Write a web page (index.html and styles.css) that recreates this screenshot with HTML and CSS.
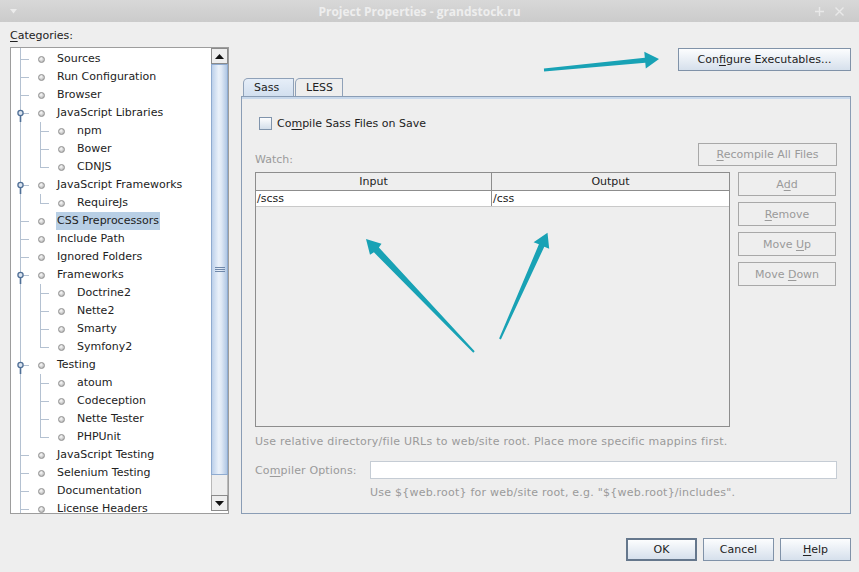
FILE: index.html
```html
<!DOCTYPE html>
<html>
<head>
<meta charset="utf-8">
<title>Project Properties - grandstock.ru</title>
<link rel="stylesheet" href="styles.css">
</head>
<body>
<div class="titlebar">
  <div class="tb-left"><svg width="7" height="5" viewBox="0 0 7 5"><path d="M0 0H7L3.5 4.5Z" fill="#ececec"/></svg></div>
  <div class="tb-title">Project Properties - grandstock.ru</div>
  <div class="tb-right">
    <svg width="9" height="9" viewBox="0 0 9 9"><path d="M4.5 0V9M0 4.5H9" stroke="#e9e9e9" stroke-width="1.4"/></svg>
    <svg width="9" height="9" viewBox="0 0 9 9"><path d="M0.5 0.5L8.5 8.5M8.5 0.5L0.5 8.5" stroke="#e9e9e9" stroke-width="1.4"/></svg>
  </div>
</div>

<div class="main">
  <div class="left">
    <div class="cat-label"><u>C</u>ategories:</div>
    <div class="treebox">
      <div class="tree">
        <div class="row"><i class="t0"></i><i class="bul"></i><span class="lbl">Sources</span></div>
        <div class="row"><i class="t0"></i><i class="bul"></i><span class="lbl">Run Configuration</span></div>
        <div class="row"><i class="t0"></i><i class="bul"></i><span class="lbl">Browser</span></div>
        <div class="row"><i class="t0 open"><svg width="18" height="18" viewBox="0 0 18 18"><path d="M9.5 11.5V18" stroke="#4f6f96" stroke-width="1.6"/><circle cx="9.5" cy="9" r="2.6" fill="#dbe4ef" stroke="#4f6f96" stroke-width="1.3"/></svg></i><i class="bul"></i><span class="lbl">JavaScript Libraries</span></div>
        <div class="row"><i class="sp1"></i><i class="t1"></i><i class="bul"></i><span class="lbl">npm</span></div>
        <div class="row"><i class="sp1"></i><i class="t1"></i><i class="bul"></i><span class="lbl">Bower</span></div>
        <div class="row last"><i class="sp1"></i><i class="t1"></i><i class="bul"></i><span class="lbl">CDNJS</span></div>
        <div class="row"><i class="t0 open"><svg width="18" height="18" viewBox="0 0 18 18"><path d="M9.5 11.5V18" stroke="#4f6f96" stroke-width="1.6"/><circle cx="9.5" cy="9" r="2.6" fill="#dbe4ef" stroke="#4f6f96" stroke-width="1.3"/></svg></i><i class="bul"></i><span class="lbl">JavaScript Frameworks</span></div>
        <div class="row last"><i class="sp1"></i><i class="t1"></i><i class="bul"></i><span class="lbl">RequireJs</span></div>
        <div class="row sel"><i class="t0"></i><i class="bul"></i><span class="lbl">CSS Preprocessors</span></div>
        <div class="row"><i class="t0"></i><i class="bul"></i><span class="lbl">Include Path</span></div>
        <div class="row"><i class="t0"></i><i class="bul"></i><span class="lbl">Ignored Folders</span></div>
        <div class="row"><i class="t0 open"><svg width="18" height="18" viewBox="0 0 18 18"><path d="M9.5 11.5V18" stroke="#4f6f96" stroke-width="1.6"/><circle cx="9.5" cy="9" r="2.6" fill="#dbe4ef" stroke="#4f6f96" stroke-width="1.3"/></svg></i><i class="bul"></i><span class="lbl">Frameworks</span></div>
        <div class="row"><i class="sp1"></i><i class="t1"></i><i class="bul"></i><span class="lbl">Doctrine2</span></div>
        <div class="row"><i class="sp1"></i><i class="t1"></i><i class="bul"></i><span class="lbl">Nette2</span></div>
        <div class="row"><i class="sp1"></i><i class="t1"></i><i class="bul"></i><span class="lbl">Smarty</span></div>
        <div class="row last"><i class="sp1"></i><i class="t1"></i><i class="bul"></i><span class="lbl">Symfony2</span></div>
        <div class="row"><i class="t0 open"><svg width="18" height="18" viewBox="0 0 18 18"><path d="M9.5 11.5V18" stroke="#4f6f96" stroke-width="1.6"/><circle cx="9.5" cy="9" r="2.6" fill="#dbe4ef" stroke="#4f6f96" stroke-width="1.3"/></svg></i><i class="bul"></i><span class="lbl">Testing</span></div>
        <div class="row"><i class="sp1"></i><i class="t1"></i><i class="bul"></i><span class="lbl">atoum</span></div>
        <div class="row"><i class="sp1"></i><i class="t1"></i><i class="bul"></i><span class="lbl">Codeception</span></div>
        <div class="row"><i class="sp1"></i><i class="t1"></i><i class="bul"></i><span class="lbl">Nette Tester</span></div>
        <div class="row last"><i class="sp1"></i><i class="t1"></i><i class="bul"></i><span class="lbl">PHPUnit</span></div>
        <div class="row"><i class="t0"></i><i class="bul"></i><span class="lbl">JavaScript Testing</span></div>
        <div class="row"><i class="t0"></i><i class="bul"></i><span class="lbl">Selenium Testing</span></div>
        <div class="row"><i class="t0"></i><i class="bul"></i><span class="lbl">Documentation</span></div>
        <div class="row"><i class="t0"></i><i class="bul"></i><span class="lbl">License Headers</span></div>
      </div>
      <div class="vscroll">
        <div class="sb-btn"><svg width="9" height="5" viewBox="0 0 9 5"><path d="M0 5H9L4.5 0Z" fill="#111"/></svg></div>
        <div class="sb-thumb"><svg width="10" height="5" viewBox="0 0 10 5"><path d="M0 0.5H10M0 2.5H10M0 4.5H10" stroke="#6f88aa" stroke-width="1"/></svg></div>
        <div class="sb-track"></div>
        <div class="sb-btn"><svg width="9" height="5" viewBox="0 0 9 5"><path d="M0 0H9L4.5 5Z" fill="#111"/></svg></div>
      </div>
    </div>
  </div>

  <div class="right">
    <div class="topbar"><div class="btn cfg"><span>Con<u>f</u>igure Executables...</span></div></div>
    <div class="tabs">
      <div class="tab tab-sel">Sass</div>
      <div class="tab">LESS</div>
    </div>
    <div class="panel">
      <div class="chkrow"><i class="chk"></i><span>Co<u>m</u>pile Sass Files on Save</span></div>
      <div class="watchrow">
        <span class="dim watch">Watch:</span>
        <div class="btn dis recompile"><span><u>R</u>ecompile All Files</span></div>
      </div>
      <div class="tablerow">
        <div class="tbl">
          <div class="thead"><div class="th">Input</div><div class="th">Output</div></div>
          <div class="tr"><div class="td">/scss</div><div class="td">/css</div></div>
        </div>
        <div class="sidebtns">
          <div class="btn dis side"><span>A<u>d</u>d</span></div>
          <div class="btn dis side"><span><u>R</u>emove</span></div>
          <div class="btn dis side"><span>Move <u>U</u>p</span></div>
          <div class="btn dis side"><span>Move <u>D</u>own</span></div>
        </div>
      </div>
      <div class="dim help">Use relative directory/file URLs to web/site root. Place more specific mappins first.</div>
      <div class="comprow">
        <span class="dim complabel">Co<u>m</u>piler Options:</span>
        <div class="input"></div>
      </div>
      <div class="dim note">Use ${web.root} for web/site root, e.g. "${web.root}/includes".</div>
    </div>
  </div>
</div>

<div class="footer">
  <div class="btn fbtn ok"><span>OK</span></div>
  <div class="btn fbtn"><span>Cancel</span></div>
  <div class="btn fbtn"><span><u>H</u>elp</span></div>
</div>

<svg class="arrows" width="859" height="572" viewBox="0 0 859 572">
  <polygon fill="#18a2b5" points="543.9,68.5 644.8,57.8 644.3,51.8 659,59 645.8,68.6 645.3,62.8 544.1,71.5"/>
  <polygon fill="#18a2b5" points="474.7,351.3 378.9,247.5 381.5,243.8 366,239 370,254.8 373.9,252.3 473.3,352.7"/>
  <polygon fill="#18a2b5" points="499.1,338.6 538.9,244.3 533.6,242.3 547.5,232.7 549.2,248.8 544.3,246.7 500.9,339.4"/>
</svg>
</body>
</html>
```

FILE: styles.css
```css
* { box-sizing: border-box; }
html, body { margin: 0; padding: 0; }
body {
  width: 859px;
  height: 572px;
  overflow: hidden;
  position: relative;
  background: #eeeeee;
  font-family: "DejaVu Sans", sans-serif;
  font-size: 11px;
  color: #222222;
}
u { text-decoration: underline; text-underline-offset: 2px; }
i { display: block; font-style: normal; }

/* title bar */
.titlebar {
  height: 22px;
  display: flex;
  align-items: center;
  background: linear-gradient(#d8d8d8, #cbcbcb);
}
.tb-left { width: 26px; display: flex; justify-content: center; padding-top: 1px; }
.tb-title {
  flex: 1;
  text-align: center;
  font-family: "Open Sans", sans-serif;
  font-weight: bold;
  font-size: 12px;
  color: #eeeeee;
}
.tb-right { width: 46px; display: flex; gap: 11px; padding-left: 2px; }

/* main */
.main { display: flex; height: 492px; padding-left: 10px; }
.left { width: 219px; display: flex; flex-direction: column; }
.cat-label { height: 25px; padding-top: 7px; line-height: 14px; }
.treebox {
  height: 467px;
  border: 1px solid #9d9d9d;
  background: #ffffff;
  display: flex;
  overflow: hidden;
}
.tree {
  flex: 1;
  padding-top: 2px;
  overflow: hidden;
  background: linear-gradient(#b4c1d1, #b4c1d1) 9px 0 / 1px 100% no-repeat;
}
.row { height: 18px; display: flex; align-items: center; white-space: nowrap; }
.t0 {
  width: 18px; height: 18px; flex: none;
  background: linear-gradient(#b4c1d1, #b4c1d1) 9px 9px / 9px 1px no-repeat;
}
.t0 svg { display: block; }
.sp1 { width: 29px; height: 18px; flex: none; }
.t1 {
  width: 9px; height: 18px; flex: none;
  background:
    linear-gradient(#b4c1d1, #b4c1d1) 0 0 / 1px 100% no-repeat,
    linear-gradient(#b4c1d1, #b4c1d1) 0 9px / 9px 1px no-repeat;
}
.last .t1 { background-size: 1px 10px, 9px 1px; }
.bul {
  width: 7px; height: 7px; flex: none;
  margin-left: 9px;
  border-radius: 50%;
  border: 1px solid #8f8f8f;
  background: radial-gradient(circle at 40% 35%, #fbfbfb, #bcbcbc 75%);
}
.lbl { margin-left: 11px; padding: 0 1px; line-height: 18px; }
.sel .lbl { background: #b8cfe5; }

.vscroll { width: 17px; flex: none; display: flex; flex-direction: column; padding-bottom: 2px; }
.sb-btn {
  height: 16px; flex: none;
  border: 1px solid #8b8b8b;
  background: #eeeeee;
  display: flex; align-items: center; justify-content: center;
}
.sb-thumb {
  height: 411px; flex: none;
  border: 1px solid #8fabd0;
  background: linear-gradient(90deg, #bcd0ea, #eaf1fa 45%, #e0e9f5 62%, #b0c7e4);
  display: flex; align-items: center; justify-content: center;
}
.sb-track { flex: 1; background: #eeeeee; border-left: 1px solid #b9b9b9; border-right: 1px solid #b9b9b9; }

/* right column */
.right { width: 610px; margin-left: 12px; display: flex; flex-direction: column; }
.topbar { padding-top: 26px; display: flex; justify-content: flex-end; }
.btn {
  height: 23px;
  border: 1px solid #8092a8;
  background: linear-gradient(#fcfdfe, #d6e0ec);
  display: flex; align-items: center; justify-content: center;
  white-space: nowrap;
  color: #222222;
}
.cfg { width: 173px; }
.tabs { margin-top: 7px; height: 18px; display: flex; padding-left: 2px; align-items: flex-end; }
.tab {
  height: 18px;
  padding: 0 10px;
  border: 1px solid #8fa1b8;
  border-bottom: none;
  border-top-left-radius: 5px;
  display: flex; align-items: center;
  background: #eeeeee;
}
.tab-sel { width: 51px; background: linear-gradient(#e6eef8, #d2dfef); }
.tab + .tab { width: 48px; margin-left: 1px; }
.panel {
  height: 418px;
  border: 1px solid #8a9db5;
  box-shadow: inset 0 2px 0 #c8d8eb;
  padding: 18px 13px 0 13px;
  display: flex; flex-direction: column;
}
.chkrow { height: 16px; display: flex; align-items: center; }
.chk {
  width: 13px; height: 13px; margin-left: 4px;
  border: 1px solid #8094ac;
  background: linear-gradient(#fdfdfe, #d3deea);
}
.chkrow span { margin-left: 5px; }
.dim { color: #9a9a9a; }
.watchrow { margin-top: 12px; height: 23px; display: flex; justify-content: space-between; align-items: flex-end; }
.watch { line-height: 14px; margin-bottom: -1px; }
.btn.dis { border-color: #a8a8a8; background: #eeeeee; color: #9a9a9a; }
.recompile { width: 139px; }
.tablerow { margin-top: 6px; height: 255px; display: flex; gap: 8px; }
.tbl { width: 475px; border: 1px solid #8d8d8d; background: #eeeeee; }
.thead { display: grid; grid-template-columns: 236px 1fr; height: 18px; border-bottom: 1px solid #8d8d8d; }
.th { text-align: center; line-height: 18px; }
.th:first-child { border-right: 1px solid #8d8d8d; }
.tr { display: grid; grid-template-columns: 236px 1fr; height: 16px; background: #ffffff; border-bottom: 1px solid #c9c9c9; }
.td { line-height: 15px; padding-left: 1px; }
.td:first-child { border-right: 1px solid #8d8d8d; }
.sidebtns { width: 98px; display: flex; flex-direction: column; gap: 6px; }
.side { height: 24px; }
.help { margin-top: 7px; line-height: 16px; letter-spacing: 0.24px; }
.comprow { margin-top: 11px; height: 18px; display: flex; align-items: center; }
.complabel { width: 115px; flex: none; letter-spacing: 0.15px; }
.input { flex: 1; height: 18px; border: 1px solid #c5ccd4; background: #ffffff; }
.note { margin-top: 6px; margin-left: 115px; line-height: 16px; letter-spacing: 0.23px; }

/* footer */
.footer { margin-top: 24px; display: flex; justify-content: flex-end; gap: 6px; padding-right: 8px; }
.fbtn { width: 71px; }
.ok { border: 2px solid #65778c; }

.arrows { position: absolute; left: 0; top: 0; pointer-events: none; }
```
